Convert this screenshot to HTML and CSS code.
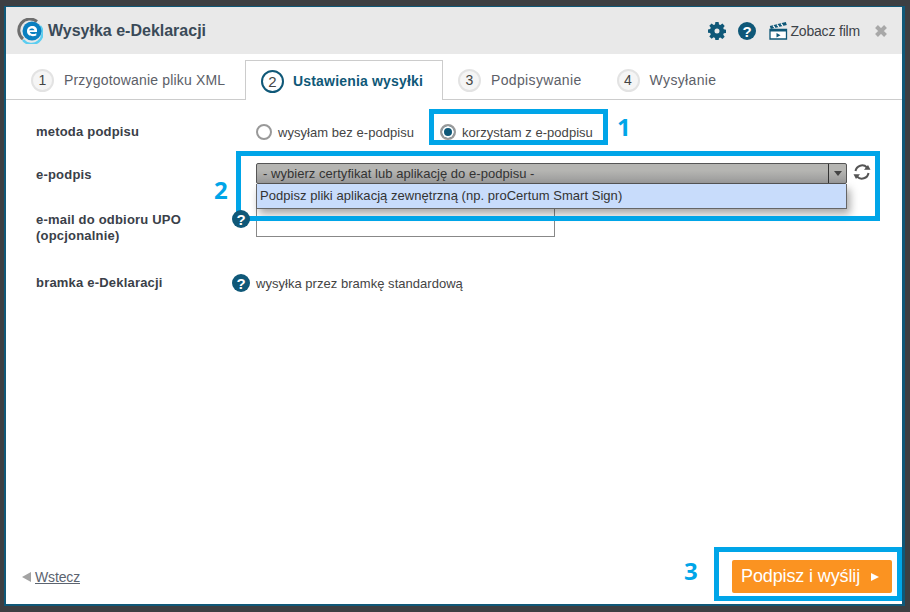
FILE: index.html
```
<!DOCTYPE html>
<html lang="pl">
<head>
<meta charset="utf-8">
<title>Wysyłka e-Deklaracji</title>
<link rel="stylesheet" href="styles.css">
</head>
<body>
<div class="dialog">
  <header class="head">
    <svg class="logo" width="26" height="26" viewBox="0 0 26 26">
      <path d="M20 3.500A11 11 0 0 0 6 21" fill="none" stroke="#6e6e6e" stroke-width="3"/>
      <path d="M23 8a11 11 0 0 1-17 14" fill="none" stroke="#5ccdf0" stroke-width="2.500"/>
      <circle cx="15" cy="13" r="9.500" fill="#0a7fc0"/>
      <path d="M10 12.200h10v1.800h-7.200c.3 2 3.800 2.800 6.500 1.200v2.200c-4 1.800-9.300.3-9.300-4.200 0-4.800 6-6.700 9-3.700 1 1 1 2.500 1 2.700h-2.600c-.2-2-4.400-2.400-5.400 0z" fill="#fff"/>
    </svg>
    <h1 class="title">Wysyłka e-Deklaracji</h1>
    <div class="tools">
      <svg class="gear" width="18" height="18" viewBox="0 0 18 18">
        <path fill="#0f5878" fill-rule="evenodd" d="M7.400 0h3.200l.4 2.500 1.400.6 2-1.500 2.300 2.300-1.500 2 .6 1.400 2.200.4v3.200l-2.200.4-.6 1.400 1.500 2-2.300 2.300-2-1.500-1.400.6-.4 2.300H7.400L7 15.900l-1.400-.6-2 1.500-2.300-2.300 1.500-2-.6-1.400L0 10.700V7.500l2.200-.4.600-1.400-1.500-2 2.300-2.300 2 1.500L7 2.500zM9 6.600a2.500 2.500 0 1 0 0 5 2.500 2.500 0 0 0 0-5z"/>
      </svg>
      <svg class="help" width="18" height="18" viewBox="0 0 18 18">
        <circle cx="9" cy="9" r="9" fill="#0f5878"/>
        <text x="9" y="14.500" class="help-q">?</text>
      </svg>
      <svg class="film" width="19" height="19" viewBox="0 0 19 19">
        <path d="M1 8.500h16.500v9.500H1z" fill="#fff" stroke="#0f5878" stroke-width="1.300"/>
        <path d="M.8 5l16-4 1 3-16 4z" fill="#0f5878"/>
        <path d="M4 4.500l2 2.300M8 3.500l2 2.300M12 2.500l2 2.300" stroke="#fff" stroke-width="1.200"/>
        <path d="M1 8.500h16.500v2H1z" fill="#0f5878"/>
        <path d="M7.500 12l4 2.300-4 2.300z" fill="#0f5878"/>
      </svg>
      <span class="film-label">Zobacz film</span>
      <svg class="close" width="14" height="14" viewBox="0 0 14 14">
        <path d="M2.500 2.500l9 9M11.500 2.500l-9 9" stroke="#a8a8a8" stroke-width="4"/>
      </svg>
    </div>
  </header>

  <nav class="tabs">
    <div class="tab"><span class="num">1</span>Przygotowanie pliku XML</div>
    <div class="tab tab-active"><span class="num">2</span>Ustawienia wysyłki</div>
    <div class="tab tab-wide"><span class="num">3</span>Podpisywanie</div>
    <div class="tab tab-wide"><span class="num">4</span>Wysyłanie</div>
  </nav>

  <main class="form">
    <div class="row row-method">
      <div class="label">metoda podpisu</div>
      <div class="radios">
        <span class="radio-item"><span class="radio"></span>wysyłam bez e-podpisu</span>
        <span class="radio-item"><span class="radio radio-on"></span>korzystam z e-podpisu</span>
      </div>
    </div>
    <div class="row row-sign">
      <div class="label">e-podpis</div>
      <div class="select">
        <span class="select-text">- wybierz certyfikat lub aplikację do e-podpisu -</span>
        <span class="select-arrow"></span>
      </div>
      <svg class="refresh" width="18" height="18" viewBox="0 0 18 18">
        <path d="M2.500 8a6.700 6.700 0 0 1 11.500-3.500M15.500 10a6.700 6.700 0 0 1-11.500 3.500" fill="none" stroke="#555" stroke-width="2"/>
        <path d="M11 6.800h6.500l-2.500-4.800zM7 11.200H.5l2.500 4.800z" fill="#555"/>
      </svg>
    </div>
    <div class="row row-mail">
      <div class="label">e-mail do odbioru UPO<br>(opcjonalnie)</div>
      <svg class="q" width="18" height="18" viewBox="0 0 18 18">
        <circle cx="9" cy="9" r="9" fill="#0f5878"/>
        <text x="9" y="14.500" class="help-q">?</text>
      </svg>
      <div class="input"></div>
    </div>
    <div class="row row-gate">
      <div class="label">bramka e-Deklaracji</div>
      <svg class="q" width="18" height="18" viewBox="0 0 18 18">
        <circle cx="9" cy="9" r="9" fill="#0f5878"/>
        <text x="9" y="14.500" class="help-q">?</text>
      </svg>
      <span class="value">wysyłka przez bramkę standardową</span>
    </div>
  </main>

  <footer class="foot">
    <a class="back" href="#"><span class="back-arrow"></span><span class="back-text">Wstecz</span></a>
    <button class="send" type="button">Podpisz i wyślij<span class="send-arrow"></span></button>
  </footer>
</div>

<div class="dropdown">Podpisz pliki aplikacją zewnętrzną (np. proCertum Smart Sign)</div>
<div class="mark mark-1"></div>
<div class="mark mark-2"></div>
<div class="mark mark-3"></div>
<span class="digit digit-1">1</span>
<span class="digit digit-2">2</span>
<span class="digit digit-3">3</span>
</body>
</html>
```

FILE: styles.css
```
* { box-sizing: border-box; }
html, body { height: 100%; }
body {
  margin: 0;
  padding: 6px 5px 6px 4px;
  background: #3d3f42;
  font-family: "Liberation Sans", Arial, sans-serif;
  color: #333;
  overflow: hidden;
  position: relative;
}
.dialog {
  height: 600px;
  display: flex;
  flex-direction: column;
  background: #fff;
  border: 1px solid #0f5878;
  border-width: 1px 3px 2px 2px;
}
.head {
  height: 47px;
  flex: none;
  background: #e9e9e9;
  display: flex;
  align-items: center;
  padding: 0 14px 0 11px;
}
.logo { margin-right: 5px; }
.title { margin: 0; font-size: 16px; font-weight: bold; color: #3a4a58; }
.tools { margin-left: auto; display: flex; align-items: center; }
.gear { margin-right: 12px; }
.help { margin-right: 13px; }
.help-q { font: bold 15px "Liberation Sans", sans-serif; fill: #fff; text-anchor: middle; }
.film { margin-right: 2px; }
.film-label { font-size: 14px; letter-spacing: -.18px; color: #3d4348; margin-right: 14px; }
.tabs {
  height: 46px;
  flex: none;
  display: flex;
  align-items: flex-end;
  border-bottom: 1px solid #ccc;
  padding-left: 19px;
}
.tab {
  height: 39px;
  display: flex;
  align-items: center;
  font-size: 14px;
  letter-spacing: .18px;
  color: #5c6068;
  margin-right: 15px;
  padding-top: 1px;
}
.tab:first-child { margin-right: 19px; width: 201px; padding-left: 6px; }
.tab-active {
  width: 198px;
  height: 40px;
  margin: 0 15px 0 0;
  padding-left: 15px;
  border: 1px solid #ccc;
  border-bottom: 0;
  background: #fff;
  position: relative;
  top: 1px;
  font-weight: bold;
  color: #0f5878;
}
.tab-wide { letter-spacing: .35px; }
.tab:nth-child(3) { margin-right: 35px; }
.num {
  width: 23px;
  height: 23px;
  margin-right: 10px;
  border: 2px solid #e3e3e3;
  border-radius: 50%;
  background: #f5f5f5;
  display: flex;
  align-items: center;
  justify-content: center;
  font-size: 14px;
  font-weight: normal;
  color: #444;
}
.tab-active .num { border-color: #0f5878; background: #fff; font-size: 15px; margin-right: 9px; }
.form {
  flex: 1;
  padding: 0 0 0 30px;
  font-size: 13px;
}
.row { display: flex; align-items: flex-start; }
.label { width: 196px; flex: none; font-size: 13px; letter-spacing: .2px; font-weight: bold; color: #3a4048; line-height: 16px; }
.row-method { padding-top: 24px; height: 54px; }
.radios { display: flex; margin-left: 24px; }
.radio-item { display: flex; align-items: center; height: 16px; color: #444; letter-spacing: .04px; }
.radio-item:first-child { width: 184px; }
.radio {
  width: 16px;
  height: 16px;
  margin-right: 6px;
  border: 2px solid #999;
  border-radius: 50%;
  background: #fff;
}
.radio-on { background: #0f5878; box-shadow: inset 0 0 0 2px #fff; }
.row-sign { height: 35px; padding-top: 13px; }
.select {
  width: 591px;
  height: 21px;
  margin-left: 24px;
  flex: none;
  display: flex;
  align-items: center;
  border: 1px solid #555;
  border-radius: 2px;
  background: linear-gradient(#b5b5b2 0 35%, #999 100%);
  margin-top: -4px;
}
.select-text { padding-left: 6px; font-size: 13px; letter-spacing: .04px; color: #333; flex: 1; }
.select-arrow {
  width: 18px;
  height: 19px;
  border-left: 1px solid #333;
  position: relative;
}
.select-arrow::after {
  content: "";
  position: absolute;
  left: 5px;
  top: 7px;
  border: 4px solid transparent;
  border-top: 5px solid #444;
  border-bottom: 0;
}
.refresh { margin: -4px 0 0 6px; flex: none; }
.row-mail { height: 64px; padding-top: 23px; }
.row-mail .q { margin-top: -2px; flex: none; position: relative; z-index: 1; }
.input { width: 299px; height: 30px; margin: -5px 0 0 6px; border: 1px solid #888; flex: none; background: #fff; }
.row-gate { align-items: center; height: 18px; margin-top: 21px; }
.row-gate .q { flex: none; }
.value { margin-left: 6px; color: #444; letter-spacing: .03px; }
.foot {
  height: 52px;
  flex: none;
  display: flex;
  align-items: center;
  justify-content: space-between;
  padding: 0 10px 3px 16px;
}
.back { display: flex; align-items: center; color: #5c6470; font-size: 14px; letter-spacing: -.15px; text-decoration: none; }
.back-arrow {
  margin-right: 4px;
  border: 5.500px solid transparent;
  border-right: 9px solid #a3a3a3;
  border-left: 0;
}
.back-text { text-decoration: underline; }
.send {
  width: 160px;
  height: 33px;
  border: 0;
  border-radius: 2px;
  background: #fb9321;
  color: #fff;
  font: 18px "Liberation Sans", sans-serif;
  letter-spacing: -.12px;
  display: flex;
  align-items: center;
  justify-content: flex-start;
  padding: 0 0 0 9px;
}
.send-arrow {
  margin-left: 11px;
  border: 4.500px solid transparent;
  border-left: 8px solid #fff;
  border-right: 0;
}
.dropdown {
  position: absolute;
  left: 256px;
  top: 184px;
  width: 591px;
  height: 25px;
  padding-left: 3px;
  border: 1px solid #666;
  border-width: 0 1px 1px 1px;
  background: #c8dcfb;
  font-size: 13px;
  letter-spacing: .04px;
  line-height: 24px;
  color: #333;
  box-shadow: 3px 5px 8px rgba(0,0,0,.35);
}
.mark { position: absolute; border: 5px solid #00a5e8; }
.mark-1 { left: 429px; top: 109px; width: 179px; height: 36px; }
.mark-2 { left: 236px; top: 151px; width: 644px; height: 70px; }
.mark-3 { left: 714px; top: 547px; width: 188px; height: 54px; }
.digit {
  position: absolute;
  font: bold 24px "Open Sans", sans-serif;
  color: #00a5e8;
  line-height: 30px;
}
.digit-1 { left: 617px; top: 112px; }
.digit-2 { left: 214px; top: 175px; }
.digit-3 { left: 684px; top: 556px; }
```
